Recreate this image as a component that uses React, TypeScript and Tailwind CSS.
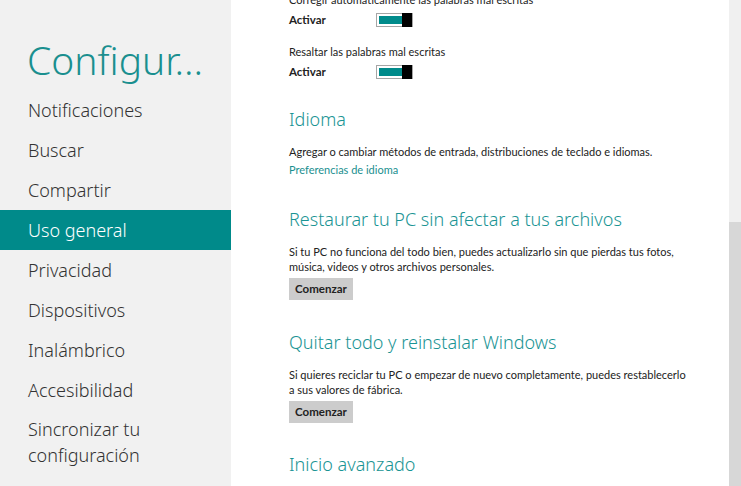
const nav = [
  'Notificaciones',
  'Buscar',
  'Compartir',
  'Uso general',
  'Privacidad',
  'Dispositivos',
  'Inalámbrico',
  'Accesibilidad',
];

function Toggle() {
  return (
    <div className="flex h-[14px] w-[37px] border border-[#a6a6a6] bg-white p-[2px] pr-0">
      <div className="flex-1 bg-[#008b8b]" />
      <div className="-my-[3px] w-[10px] bg-black" />
    </div>
  );
}

function Heading({ children }: { children: React.ReactNode }) {
  return (
    <h2
      className="text-[18px] font-light leading-[24px] text-[#1a9494]"
      style={{ fontFamily: '"Segoe UI", "Noto Sans", sans-serif' }}
    >
      {children}
    </h2>
  );
}

function Button() {
  return (
    <button className="mt-[4px] h-[22px] w-[64px] bg-[#cccccc] text-[11.5px] font-bold text-[#222]">
      Comenzar
    </button>
  );
}

export default function App() {
  return (
    <div
      className="flex h-[486px] w-[741px] overflow-hidden bg-white"
      style={{ fontFamily: '"Segoe UI", "Noto Sans", "Open Sans", sans-serif' }}
    >
      {/* left menu */}
      <div className="flex w-[231px] flex-col bg-[#f1f1f1] pt-[34px]">
        <h1 className="pl-[27px] text-[39px] font-light leading-[52px] text-[#1a8f8f]">
          Configur...
        </h1>
        <div className="mt-[4px] flex flex-col">
          {nav.map((item) => (
            <div
              key={item}
              className={
                item === 'Uso general'
                  ? 'flex h-[40px] items-center bg-[#008a8a] pl-[28px] text-[18px] font-light text-white'
                  : 'flex h-[40px] items-center pl-[28px] text-[18px] font-light text-[#333]'
              }
            >
              {item}
            </div>
          ))}
          <div className="pl-[28px] pt-[6px] text-[18px] font-light leading-[26px] text-[#333]">
            Sincronizar tu
            <br />
            configuración
          </div>
        </div>
      </div>

      {/* content */}
      <div
        className="flex-1 pl-[58px] text-[11px] text-[#222]"
        style={{ fontFamily: '"Segoe UI", Lato, "Noto Sans", sans-serif' }}
      >
        <div className="-mt-[8px] flex flex-col">
          <p className="leading-[15px]">Corregir automáticamente las palabras mal escritas</p>
          <div className="mt-[4px] flex items-center">
            <span className="w-[87px] text-[11.5px] font-bold">Activar</span>
            <Toggle />
          </div>

          <p className="mt-[16px] leading-[15px]">Resaltar las palabras mal escritas</p>
          <div className="mt-[4px] flex items-center">
            <span className="w-[87px] text-[11.5px] font-bold">Activar</span>
            <Toggle />
          </div>

          <div className="mt-[26px]">
            <Heading>Idioma</Heading>
          </div>
          <p className="mt-[13px] leading-[15px]">
            Agregar o cambiar métodos de entrada, distribuciones de teclado e idiomas.
          </p>
          <p className="mt-[3px] leading-[15px] text-[#1a8f8f]">Preferencias de idioma</p>

          <div className="mt-[30px]">
            <Heading>Restaurar tu PC sin afectar a tus archivos</Heading>
          </div>
          <p className="mt-[13px] w-[400px] leading-[15px]">
            Si tu PC no funciona del todo bien, puedes actualizarlo sin que pierdas tus fotos,
            música, videos y otros archivos personales.
          </p>
          <Button />

          <div className="mt-[30px]">
            <Heading>Quitar todo y reinstalar Windows</Heading>
          </div>
          <p className="mt-[13px] w-[400px] leading-[15px]">
            Si quieres reciclar tu PC o empezar de nuevo completamente, puedes restablecerlo
            a sus valores de fábrica.
          </p>
          <Button />

          <div className="mt-[29px]">
            <Heading>Inicio avanzado</Heading>
          </div>
        </div>
      </div>

      {/* scrollbar */}
      <div className="flex w-[12px] flex-col bg-[#f0f0f0]">
        <div className="h-[222px]" />
        <div className="flex-1 bg-[#d7d7d7]" />
      </div>
    </div>
  );
}
